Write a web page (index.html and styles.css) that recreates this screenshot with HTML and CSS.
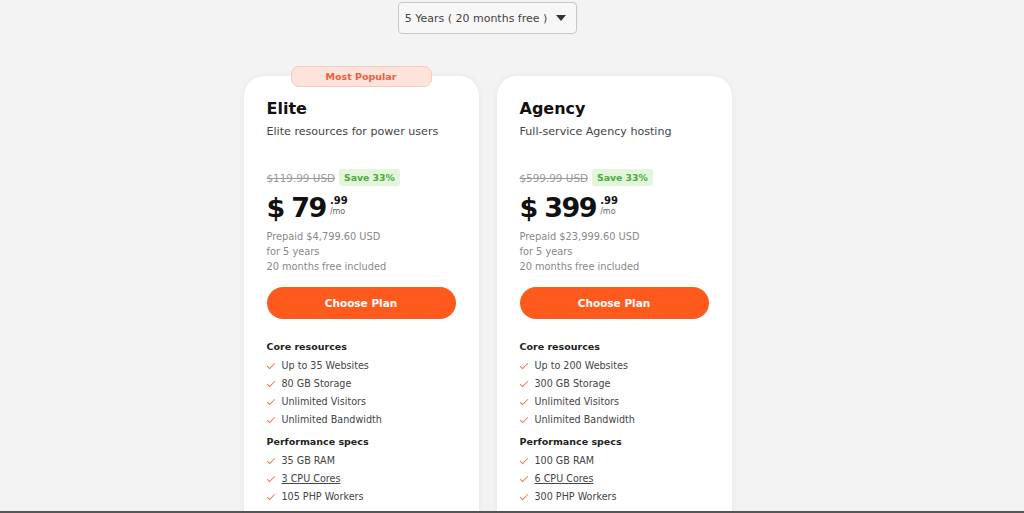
FILE: index.html
```html
<!DOCTYPE html>
<html lang="en">
<head>
  <meta charset="UTF-8">
  <title>Hosting Plans</title>
  <link rel="stylesheet" href="styles.css">
</head>
<body>
  <div class="wrap">
    <!-- Term selector -->
    <div class="term">
      <button class="term-select">5 Years ( 20 months free ) <span class="caret"></span></button>
    </div>

    <div class="plans">
      <!-- Elite -->
      <div class="card">
        <div class="badge">Most Popular</div>
        <h2>Elite</h2>
        <p class="desc">Elite resources for power users</p>
        <div class="old-row">
          <span class="old">$119.99 USD</span>
          <span class="save">Save 33%</span>
        </div>
        <div class="price">
          <span class="cur">$</span>
          <span class="amount">79</span>
          <span class="tail"><b>.99</b><small>/mo</small></span>
        </div>
        <div class="prepaid">
          Prepaid $4,799.60 USD<br>for 5 years<br>20 months free included
        </div>
        <button class="choose">Choose Plan</button>
        <h4>Core resources</h4>
        <ul class="features">
          <li>Up to 35 Websites</li>
          <li>80 GB Storage</li>
          <li>Unlimited Visitors</li>
          <li>Unlimited Bandwidth</li>
        </ul>
        <h4>Performance specs</h4>
        <ul class="features">
          <li>35 GB RAM</li>
          <li><u>3 CPU Cores</u></li>
          <li>105 PHP Workers</li>
        </ul>
      </div>

      <!-- Agency -->
      <div class="card">
        <h2>Agency</h2>
        <p class="desc">Full-service Agency hosting</p>
        <div class="old-row">
          <span class="old">$599.99 USD</span>
          <span class="save">Save 33%</span>
        </div>
        <div class="price">
          <span class="cur">$</span>
          <span class="amount">399</span>
          <span class="tail"><b>.99</b><small>/mo</small></span>
        </div>
        <div class="prepaid">
          Prepaid $23,999.60 USD<br>for 5 years<br>20 months free included
        </div>
        <button class="choose">Choose Plan</button>
        <h4>Core resources</h4>
        <ul class="features">
          <li>Up to 200 Websites</li>
          <li>300 GB Storage</li>
          <li>Unlimited Visitors</li>
          <li>Unlimited Bandwidth</li>
        </ul>
        <h4>Performance specs</h4>
        <ul class="features">
          <li>100 GB RAM</li>
          <li><u>6 CPU Cores</u></li>
          <li>300 PHP Workers</li>
        </ul>
      </div>
    </div>
  </div>
</body>
</html>
```

FILE: styles.css
```css
body {
  margin: 0;
  font-family: "DejaVu Sans", "Open Sans", sans-serif;
  background-color: #f3f3f3;
  height: 513px;
  overflow: hidden;
  border-bottom: 2px solid #555;
  box-sizing: border-box;
}

.wrap {
  width: 975px;
}

.term {
  display: flex;
  justify-content: center;
  padding-top: 2px;
}

.term-select {
  display: flex;
  align-items: center;
  gap: 9px;
  height: 32px;
  padding: 0 10px 0 6px;
  background: #f7f7f7;
  border: 1px solid #c8c8c8;
  border-radius: 4px;
  font-family: inherit;
  font-size: 11px;
  color: #444;
}

.caret {
  width: 0;
  height: 0;
  border-left: 5px solid transparent;
  border-right: 5px solid transparent;
  border-top: 6px solid #333;
}

.plans {
  display: flex;
  justify-content: center;
  gap: 18px;
  margin-top: 42px;
}

.card {
  position: relative;
  width: 235px;
  height: 460px;
  box-sizing: border-box;
  padding: 22px 23px 0;
  background-color: white;
  border-radius: 20px;
  box-shadow: 0 0 6px rgba(0, 0, 0, 0.06);
}

.badge {
  position: absolute;
  top: -10px;
  left: 47px;
  width: 141px;
  height: 21px;
  box-sizing: border-box;
  line-height: 19px;
  text-align: center;
  background-color: #fde3da;
  border: 1px solid #f6cbbb;
  border-radius: 8px;
  color: #e8623b;
  font-size: 9.5px;
  font-weight: bold;
}

h2 {
  margin: 0;
  font-size: 16px;
  color: #111;
  line-height: 22px;
}

.desc {
  margin: 4px 0 0;
  font-size: 11.1px;
  color: #444;
  line-height: 16px;
}

.old-row {
  display: flex;
  align-items: center;
  gap: 4px;
  margin-top: 29px;
}

.old {
  font-size: 10.4px;
  color: #999;
  text-decoration: line-through;
}

.save {
  background-color: #e3f6dc;
  color: #4caa3c;
  font-size: 9.3px;
  font-weight: bold;
  padding: 3px 5px;
  border-radius: 3px;
}

.price {
  display: flex;
  align-items: flex-start;
  margin-top: 5px;
  color: #111;
  height: 34px;
}

.cur, .amount {
  font-size: 27px;
  font-weight: bold;
  line-height: 34px;
}

.amount {
  letter-spacing: -1.5px;
}

.cur {
  margin-right: 6px;
}

.tail {
  display: flex;
  flex-direction: column;
  margin-left: 4px;
  margin-top: 4px;
  line-height: 11px;
}

.tail b {
  font-size: 10px;
}

.tail small {
  font-size: 8px;
  color: #666;
}

.prepaid {
  margin-top: 4px;
  font-size: 9.8px;
  color: #888;
  line-height: 15px;
}

.choose {
  display: block;
  width: 100%;
  height: 32px;
  margin-top: 13px;
  background-color: #fe5a1e;
  color: white;
  border: none;
  border-radius: 16px;
  font-family: inherit;
  font-size: 10.5px;
  font-weight: bold;
  cursor: pointer;
}

h4 {
  margin: 21px 0 3px;
  font-size: 9.5px;
  color: #222;
  line-height: 14px;
}

ul + h4 {
  margin-top: 6px;
}

.features {
  list-style: none;
  margin: 0;
  padding: 0;
}

.features li {
  position: relative;
  padding-left: 15px;
  font-size: 9.6px;
  color: #444;
  line-height: 18px;
}

.features li::before {
  content: "";
  position: absolute;
  left: 2px;
  top: 4px;
  width: 3px;
  height: 7px;
  border-right: 1.5px solid #e8795a;
  border-bottom: 1.5px solid #e8795a;
  transform: rotate(45deg);
}
```
